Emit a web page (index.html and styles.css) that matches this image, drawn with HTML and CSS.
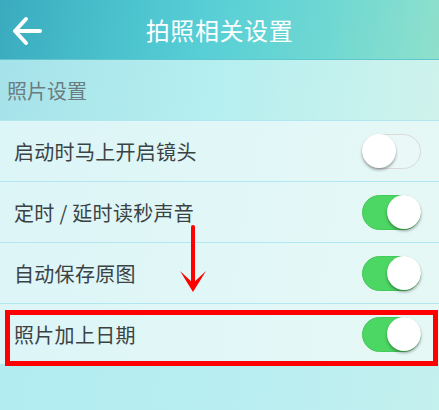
FILE: index.html
```html
<!DOCTYPE html>
<html lang="zh">
<head>
<meta charset="utf-8">
<link rel="stylesheet" href="styles.css">
</head>
<body>
<div class="screen">
  <header class="topbar">
    <svg class="back" width="32" height="30" viewBox="0 0 32 30">
      <path d="M3 15 H28 M14 3 L3 15 L14 27" fill="none" stroke="#fff" stroke-width="4" stroke-linecap="round" stroke-linejoin="round"/>
    </svg>
    <h1 class="title">拍照相关设置</h1>
  </header>
  <div class="section">照片设置</div>
  <div class="list">
    <div class="row"><span class="label">启动时马上开启镜头</span><span class="toggle"></span></div>
    <div class="row"><span class="label">定时 / 延时读秒声音</span><span class="toggle on"></span></div>
    <div class="row"><span class="label">自动保存原图</span><span class="toggle on"></span></div>
    <div class="row"><span class="label">照片加上日期</span><span class="toggle on"></span></div>
  </div>
  <div class="highlight"></div>
  <svg class="arrow" width="30" height="70" viewBox="0 0 30 70">
    <path d="M15 2 V58" stroke="#f00" stroke-width="4" stroke-linecap="round"/>
    <path d="M2 46 L15 67 L28 46 L15 58 Z" fill="#f00"/>
  </svg>
</div>
</body>
</html>
```
FILE: styles.css
```css
* { box-sizing: border-box; }
html, body { margin: 0; padding: 0; }
body {
  font-family: "Noto Sans CJK SC", "Noto Sans", sans-serif;
  background: #b6eef2;
}
.screen {
  position: relative;
  width: 439px;
  height: 410px;
  overflow: hidden;
  background: linear-gradient(100deg, #b0ebf0 0%, #b8eef2 60%, #c4f0ee 100%);
}
.topbar {
  position: relative;
  height: 60px;
  display: flex;
  align-items: center;
  justify-content: center;
  background: linear-gradient(100deg, #3aabbe 0%, #4cc4cf 30%, #5ad0d6 50%, #70d8d2 75%, #8fe0cc 100%);
  border-bottom: 1px solid #62c6cf;
}
.back {
  position: absolute;
  left: 12px;
  top: 16px;
}
.title {
  margin: 0;
  font-size: 24px;
  font-weight: 400;
  color: #fff;
  letter-spacing: 0.6px;
  line-height: 1;
}
.section {
  height: 60px;
  display: flex;
  align-items: center;
  padding-left: 7px;
  font-size: 20px;
  color: #6b7c80;
  background: linear-gradient(100deg, #a6e2ea 0%, #b6eff0 50%, #cff3ec 100%);
}
.list {
  background: linear-gradient(100deg, #dcf5f7 0%, #e2f7f7 60%, #e6f8f5 100%);
}
.row {
  height: 61px;
  display: flex;
  align-items: center;
  justify-content: space-between;
  padding: 0 18px 0 14px;
  border-top: 1px solid #b3e7ef;
}
.label {
  font-size: 20px;
  color: #3b4244;
  letter-spacing: 0.3px;
}
.toggle {
  position: relative;
  width: 59px;
  height: 35px;
  border-radius: 18px;
  border: 1.5px solid #dadada;
  background: #eaf8f8;
}
.toggle::after {
  content: "";
  position: absolute;
  left: -1px;
  top: -1px;
  width: 34px;
  height: 34px;
  border-radius: 50%;
  background: #fff;
  box-shadow: 0 2px 3px rgba(0,0,0,0.35);
}
.toggle.on {
  background: #4cd663;
  border-color: #45c95b;
}
.toggle.on::after {
  left: auto;
  right: -1px;
}
.highlight {
  position: absolute;
  left: 5px;
  top: 310px;
  width: 433px;
  height: 56px;
  border: 5px solid #ff0000;
}
.arrow {
  position: absolute;
  left: 178px;
  top: 225px;
}
```
